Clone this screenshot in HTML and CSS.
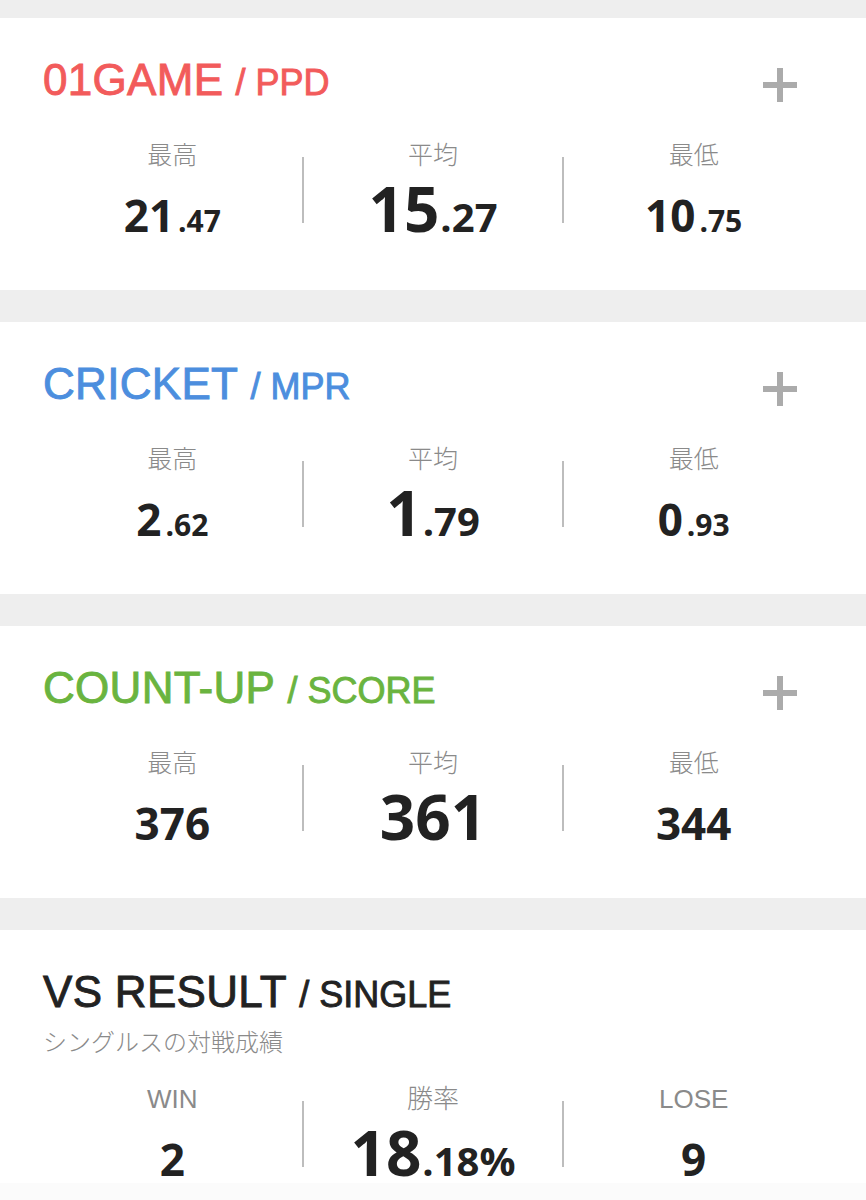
FILE: index.html
```html
<!DOCTYPE html>
<html lang="ja">
<head>
<meta charset="utf-8">
<title>Stats</title>
<link rel="stylesheet" href="styles.css">
</head>
<body>
<main class="page">
  <section class="card">
    <header class="card-head">
      <h2 class="title red"><span class="t-main">01GAME</span> <span class="t-sub">/ PPD</span></h2>
      <span class="plus" aria-label="expand"></span>
    </header>
    <div class="stats">
      <div class="col"><div class="label">最高</div><div class="num"><span class="n-md">21</span><span class="d-sm">.47</span></div></div>
      <div class="divider"></div>
      <div class="col"><div class="label">平均</div><div class="num"><span class="n-lg">15</span><span class="d-lg">.27</span></div></div>
      <div class="divider"></div>
      <div class="col"><div class="label">最低</div><div class="num"><span class="n-md">10</span><span class="d-sm">.75</span></div></div>
    </div>
  </section>

  <section class="card">
    <header class="card-head">
      <h2 class="title blue"><span class="t-main">CRICKET</span> <span class="t-sub">/ MPR</span></h2>
      <span class="plus" aria-label="expand"></span>
    </header>
    <div class="stats">
      <div class="col"><div class="label">最高</div><div class="num"><span class="n-md">2</span><span class="d-sm">.62</span></div></div>
      <div class="divider"></div>
      <div class="col"><div class="label">平均</div><div class="num"><span class="n-lg">1</span><span class="d-lg">.79</span></div></div>
      <div class="divider"></div>
      <div class="col"><div class="label">最低</div><div class="num"><span class="n-md">0</span><span class="d-sm">.93</span></div></div>
    </div>
  </section>

  <section class="card">
    <header class="card-head">
      <h2 class="title green"><span class="t-main">COUNT-UP</span> <span class="t-sub">/ SCORE</span></h2>
      <span class="plus" aria-label="expand"></span>
    </header>
    <div class="stats">
      <div class="col"><div class="label">最高</div><div class="num"><span class="n-md">376</span></div></div>
      <div class="divider"></div>
      <div class="col"><div class="label">平均</div><div class="num"><span class="n-lg">361</span></div></div>
      <div class="divider"></div>
      <div class="col"><div class="label">最低</div><div class="num"><span class="n-md">344</span></div></div>
    </div>
  </section>

  <section class="card card-vs">
    <header class="card-head">
      <h2 class="title dark"><span class="t-main">VS RESULT</span> <span class="t-sub">/ SINGLE</span></h2>
    </header>
    <p class="subtitle">シングルスの対戦成績</p>
    <div class="stats stats-vs">
      <div class="col"><div class="label">WIN</div><div class="num"><span class="n-md">2</span></div></div>
      <div class="divider"></div>
      <div class="col"><div class="label">勝率</div><div class="num"><span class="n-lg">18</span><span class="d-lg">.18%</span></div></div>
      <div class="divider"></div>
      <div class="col"><div class="label">LOSE</div><div class="num"><span class="n-md">9</span></div></div>
    </div>
  </section>
</main>
<div class="bottom-bar"></div>
</body>
</html>
```

FILE: styles.css
```css
html, body {
  margin: 0;
  padding: 0;
}
body {
  background: #eeeeee;
  font-family: "Liberation Sans", "Noto Sans CJK JP", sans-serif;
  overflow: hidden;
}
.page {
  padding-top: 18px;
  display: flex;
  flex-direction: column;
  gap: 32px;
}
.card {
  background: #ffffff;
  height: 272px;
  box-sizing: border-box;
  padding: 40px 43px 0 43px;
}
.card-vs {
  height: 300px;
}
.card-head {
  display: flex;
  align-items: center;
  justify-content: space-between;
  height: 46px;
}
.title {
  margin: 0;
  font-family: "Liberation Sans", Arial, sans-serif;
  font-weight: 400;
  font-size: 44px;
  line-height: 46px;
  white-space: nowrap;
  -webkit-text-stroke: 0.9px currentColor;
}
.t-main {
  letter-spacing: 0.3px;
}
.t-sub {
  font-size: 36px;
}
.red { color: #f25b5b; }
.blue { color: #4c8ede; }
.green { color: #6ab43f; }
.dark { color: #222222; }

.plus {
  position: relative;
  width: 34px;
  height: 34px;
  margin-right: 26px;
  margin-top: 8px;
  flex: none;
}
.plus::before,
.plus::after {
  content: "";
  position: absolute;
  background: #ababab;
}
.plus::before {
  left: 14px;
  top: 0;
  width: 6px;
  height: 34px;
}
.plus::after {
  left: 0;
  top: 14px;
  width: 34px;
  height: 6px;
}

.subtitle {
  margin: 9px 0 0 0;
  font-family: "Noto Sans CJK JP", sans-serif;
  font-weight: 300;
  font-size: 24px;
  line-height: 32px;
  color: #8a8a8a;
}

.stats {
  display: grid;
  grid-template-columns: 1fr 2px 1fr 2px 1fr;
  margin-top: 36px;
}
.stats-vs {
  margin-top: 27px;
}
.col {
  display: flex;
  flex-direction: column;
  align-items: center;
}
.label {
  font-family: "Liberation Sans", "Noto Sans CJK JP", sans-serif;
  font-weight: 300;
  font-size: 25px;
  line-height: 30px;
  height: 30px;
  color: #8a8a8a;
}
.stats-vs .label {
  font-size: 26px;
}
.num {
  margin-top: 7px;
  font-family: "Open Sans", sans-serif;
  font-weight: 700;
  font-size: 62px;
  line-height: 62px;
  height: 62px;
  color: #222222;
  white-space: nowrap;
}
.num span {
  display: inline-block;
  line-height: 1;
}
.n-lg { font-size: 62px; }
.n-md { font-size: 44px; }
.d-lg { font-size: 40px; margin-left: 1px; }
.d-sm { font-size: 30px; margin-left: 4px; }

.divider {
  background: #bdbdbd;
  margin-top: 17px;
  height: 66px;
  width: 2px;
}

.bottom-bar {
  position: fixed;
  left: 0;
  right: 0;
  bottom: 0;
  height: 17px;
  background: rgba(251, 251, 251, 0.92);
}
```
